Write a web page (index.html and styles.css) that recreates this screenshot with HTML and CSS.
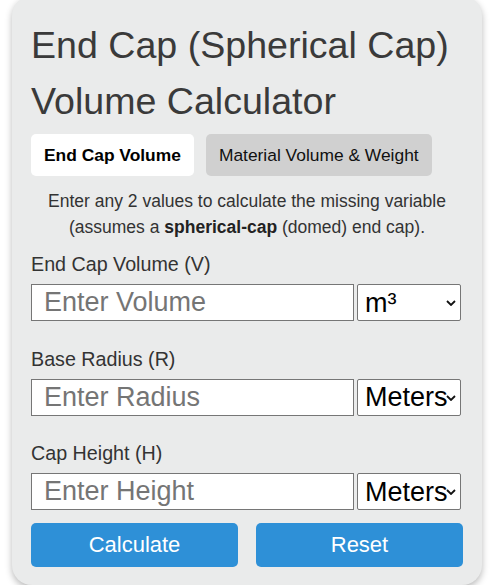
FILE: index.html
```html
<!DOCTYPE html>
<html lang="en">
<head>
<meta charset="utf-8">
<title>End Cap (Spherical Cap) Volume Calculator</title>
<link rel="stylesheet" href="styles.css">
</head>
<body>
<main class="card">
  <h1 class="title">End Cap (Spherical Cap) Volume Calculator</h1>
  <div class="tabs">
    <button class="tab tab-active" type="button">End Cap Volume</button>
    <button class="tab" type="button">Material Volume &amp; Weight</button>
  </div>
  <p class="desc">Enter any 2 values to calculate the missing variable (assumes a <strong>spherical-cap</strong> (domed) end cap).</p>

  <div class="field">
    <label class="label" for="vol">End Cap Volume (V)</label>
    <div class="row">
      <input class="input" id="vol" type="text" placeholder="Enter Volume">
      <div class="select-wrap">
        <select class="select"><option>m³</option></select>
        <svg class="chev" width="10" height="6" viewBox="0 0 10 6"><path d="M1 1 L5 5 L9 1" fill="none" stroke="#111" stroke-width="1.8"/></svg>
      </div>
    </div>
  </div>

  <div class="field">
    <label class="label" for="rad">Base Radius (R)</label>
    <div class="row">
      <input class="input" id="rad" type="text" placeholder="Enter Radius">
      <div class="select-wrap">
        <select class="select"><option>Meters</option></select>
        <svg class="chev" width="10" height="6" viewBox="0 0 10 6"><path d="M1 1 L5 5 L9 1" fill="none" stroke="#111" stroke-width="1.8"/></svg>
      </div>
    </div>
  </div>

  <div class="field">
    <label class="label" for="hgt">Cap Height (H)</label>
    <div class="row">
      <input class="input" id="hgt" type="text" placeholder="Enter Height">
      <div class="select-wrap">
        <select class="select"><option>Meters</option></select>
        <svg class="chev" width="10" height="6" viewBox="0 0 10 6"><path d="M1 1 L5 5 L9 1" fill="none" stroke="#111" stroke-width="1.8"/></svg>
      </div>
    </div>
  </div>

  <div class="actions">
    <button class="btn" type="button">Calculate</button>
    <button class="btn" type="button">Reset</button>
  </div>
</main>
</body>
</html>
```

FILE: styles.css
```css
html, body {
  margin: 0;
  padding: 0;
  background: #ffffff;
}

body {
  font-family: "Liberation Sans", Arial, sans-serif;
  color: #333333;
}

.card {
  box-sizing: border-box;
  width: 470px;
  margin: -4px 0 0 12px;
  padding: 21px 19px 18px;
  background: #eaebeb;
  border-radius: 20px;
  box-shadow: 0 3px 7px rgba(0, 0, 0, 0.28);
}

.title {
  margin: 0 0 5px;
  font-size: 37.6px;
  line-height: 56px;
  font-weight: normal;
  color: #3a3a3a;
}

.tabs {
  display: flex;
  gap: 12px;
  margin-bottom: 12px;
}

.tab {
  height: 42px;
  padding: 0 13px;
  border: none;
  border-radius: 5px;
  background: #d0d0d0;
  color: #111111;
  font-family: "Liberation Sans", Arial, sans-serif;
  font-size: 17.4px;
}

.tab-active {
  background: #ffffff;
  color: #000000;
  font-weight: bold;
}

.desc {
  margin: 0 0 14px;
  text-align: center;
  font-size: 17.5px;
  line-height: 26px;
  color: #333333;
}

.desc strong {
  color: #222222;
}

.field + .field {
  margin-top: 27.5px;
}

.label {
  display: block;
  margin-bottom: 9px;
  font-size: 19.7px;
  line-height: 21px;
  color: #333333;
}

.row {
  display: flex;
  gap: 3px;
  height: 37px;
}

.input {
  box-sizing: border-box;
  width: 323px;
  height: 37px;
  margin: 0;
  padding: 0 12px;
  border: 1px solid #767676;
  border-radius: 0;
  background: #ffffff;
  font-family: "Liberation Sans", Arial, sans-serif;
  font-size: 27px;
  color: #111111;
}

.input::placeholder {
  color: #757575;
}

.select-wrap {
  position: relative;
  width: 104px;
  height: 37px;
}

.select {
  -webkit-appearance: none;
  appearance: none;
  box-sizing: border-box;
  width: 104px;
  height: 37px;
  margin: 0;
  padding: 0 0 0 7px;
  border: 1px solid #767676;
  border-radius: 2px;
  background: #ffffff;
  font-family: "Liberation Sans", Arial, sans-serif;
  font-size: 27px;
  color: #000000;
}

.chev {
  position: absolute;
  right: 5px;
  top: 16px;
  pointer-events: none;
}

.actions {
  display: grid;
  grid-template-columns: 207px 207px;
  column-gap: 18px;
  margin-top: 13px;
}

.btn {
  height: 44px;
  border: none;
  border-radius: 5px;
  background: #2e90d7;
  color: #ffffff;
  font-family: "Liberation Sans", Arial, sans-serif;
  font-size: 22px;
}
```
